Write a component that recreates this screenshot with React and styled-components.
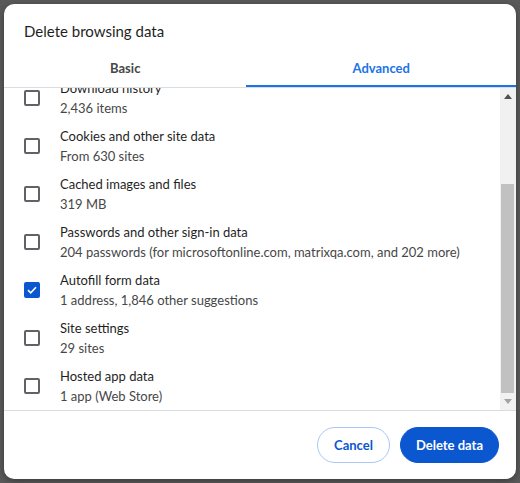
import React, { useEffect, useRef, useState } from "react";
import styled, { createGlobalStyle } from "styled-components";

const Global = createGlobalStyle`
  html, body { margin: 0; padding: 0; }
  body {
    width: 520px; height: 483px; overflow: hidden;
    background: #595959;
    font-family: Lato, "Liberation Sans", sans-serif;
  }
`;

const Backdrop = styled.div`
  width: 520px; height: 483px;
  box-sizing: border-box;
  padding: 4px;
  display: flex;
`;

const Dialog = styled.div`
  width: 512px; height: 475px;
  background: #fff;
  border-radius: 10px;
  overflow: hidden;
  display: flex; flex-direction: column;
  box-shadow: 0 2px 6px rgba(0,0,0,0.35);
`;

const Title = styled.h1`
  margin: 0;
  padding: 16px 20px 6px 20px;
  font-size: 15px; line-height: 22px; font-weight: 400;
  color: #1f1f1f;
`;

const Tabs = styled.div`
  display: flex;
  border-bottom: 1px solid #dadce0;
`;

const Tab = styled.div`
  flex: 1 1 auto;
  text-align: center;
  padding: 10px 0 7px;
  font-size: 13px; line-height: 20px; font-weight: 700;
  color: ${p => (p.$active ? "#1a73e8" : "#474747")};
  border-bottom: 2px solid ${p => (p.$active ? "#1a73e8" : "transparent")};
`;

const ListArea = styled.div`
  flex: 1 1 auto;
  min-height: 0;
  display: flex;
`;

const Scroller = styled.div`
  flex: 1 1 auto;
  overflow: hidden;
`;

const ScrollBar = styled.div`
  flex: none;
  width: 16px;
  background: #f1f1f1;
  display: flex; flex-direction: column;
`;

const ArrowButton = styled.div`
  height: 17px; flex: none;
  display: flex; align-items: center; justify-content: center;
`;

const Track = styled.div`
  flex: 1 1 auto;
  display: flex; flex-direction: column; justify-content: flex-end;
  padding: 0 2px 0 1px;
`;

const Thumb = styled.div`
  background: #c1c1c1;
  flex: none;
`;

const RangeRow = styled.div`
  height: 59px; box-sizing: border-box;
  padding: 12px 20px;
  display: flex; align-items: center; gap: 16px;
  font-size: 13px; color: #1f1f1f;
`;

const Select = styled.div`
  height: 32px; padding: 0 12px; border-radius: 8px;
  background: #e9eef6; display: flex; align-items: center; gap: 24px;
`;

const Row = styled.div`
  height: 48px;
  display: flex; align-items: center; gap: 20px;
  padding: 0 20px;
  white-space: nowrap;
`;

const Box = styled.span`
  width: 16px; height: 16px; box-sizing: border-box; flex: none;
  border-radius: 2px;
  border: 2px solid ${p => (p.$checked ? "#0b57d0" : "#5f6368")};
  background: ${p => (p.$checked ? "#0b57d0" : "#fff")};
  display: flex; align-items: center; justify-content: center;
`;

const Texts = styled.div`
  display: flex; flex-direction: column;
`;

const ItemTitle = styled.div`
  font-size: 13px; line-height: 20px; color: #1f1f1f;
`;

const ItemSub = styled.div`
  font-size: 13px; line-height: 20px; color: #474747;
`;

const Footer = styled.div`
  flex: none;
  height: 69px; box-sizing: border-box;
  border-top: 1px solid #dadce0;
  display: flex; justify-content: flex-end; align-items: center;
  gap: 10px; padding: 0 17px 0 20px;
`;

const Button = styled.button`
  height: 36px; border-radius: 18px;
  font-family: inherit; font-size: 13px; font-weight: 700;
  padding: 0 ${p => (p.$primary ? "15px" : "16px")};
  border: 1px solid ${p => (p.$primary ? "#0b57d0" : "#a8c7fa")};
  background: ${p => (p.$primary ? "#0b57d0" : "#fff")};
  color: ${p => (p.$primary ? "#fff" : "#0b57d0")};
`;

const items = [
  { t: "Browsing history", s: "3,470 items (and more on synced devices)", c: false },
  { t: "Download history", s: "2,436 items", c: false },
  { t: "Cookies and other site data", s: "From 630 sites", c: false },
  { t: "Cached images and files", s: "319 MB", c: false },
  { t: "Passwords and other sign-in data", s: "204 passwords (for microsoftonline.com, matrixqa.com, and 202 more)", c: false },
  { t: "Autofill form data", s: "1 address, 1,846 other suggestions", c: true },
  { t: "Site settings", s: "29 sites", c: false },
  { t: "Hosted app data", s: "1 app (Web Store)", c: false },
];

const Check = () => (
  <svg width="10" height="8" viewBox="0 0 10 8">
    <path d="M1 4.2 L3.7 6.8 L9 1.3" fill="none" stroke="#fff" strokeWidth="1.6" />
  </svg>
);

const Triangle = ({ up, color }) => (
  <svg width="8" height="5" viewBox="0 0 8 5">
    <polygon points={up ? "0,5 8,5 4,0" : "0,0 8,0 4,5"} fill={color} />
  </svg>
);

export default function App() {
  const ref = useRef(null);
  const [thumb, setThumb] = useState(208);
  useEffect(() => {
    const el = ref.current;
    if (!el) return;
    el.scrollTop = el.scrollHeight;
    const trackH = el.clientHeight - 34;
    setThumb(Math.round((el.clientHeight / el.scrollHeight) * trackH));
  }, []);
  return (
    <>
      <Global />
      <Backdrop>
        <Dialog>
          <Title>Delete browsing data</Title>
          <Tabs>
            <Tab>Basic</Tab>
            <Tab $active>Advanced</Tab>
          </Tabs>
          <ListArea>
            <Scroller ref={ref}>
              <RangeRow>
                Time range
                <Select>All time <span>▾</span></Select>
              </RangeRow>
              {items.map(it => (
                <Row key={it.t}>
                  <Box $checked={it.c}>{it.c && <Check />}</Box>
                  <Texts>
                    <ItemTitle>{it.t}</ItemTitle>
                    <ItemSub>{it.s}</ItemSub>
                  </Texts>
                </Row>
              ))}
            </Scroller>
            <ScrollBar>
              <ArrowButton><Triangle up color="#505050" /></ArrowButton>
              <Track><Thumb style={{ height: thumb }} /></Track>
              <ArrowButton><Triangle color="#a3a3a3" /></ArrowButton>
            </ScrollBar>
          </ListArea>
          <Footer>
            <Button>Cancel</Button>
            <Button $primary>Delete data</Button>
          </Footer>
        </Dialog>
      </Backdrop>
    </>
  );
}
